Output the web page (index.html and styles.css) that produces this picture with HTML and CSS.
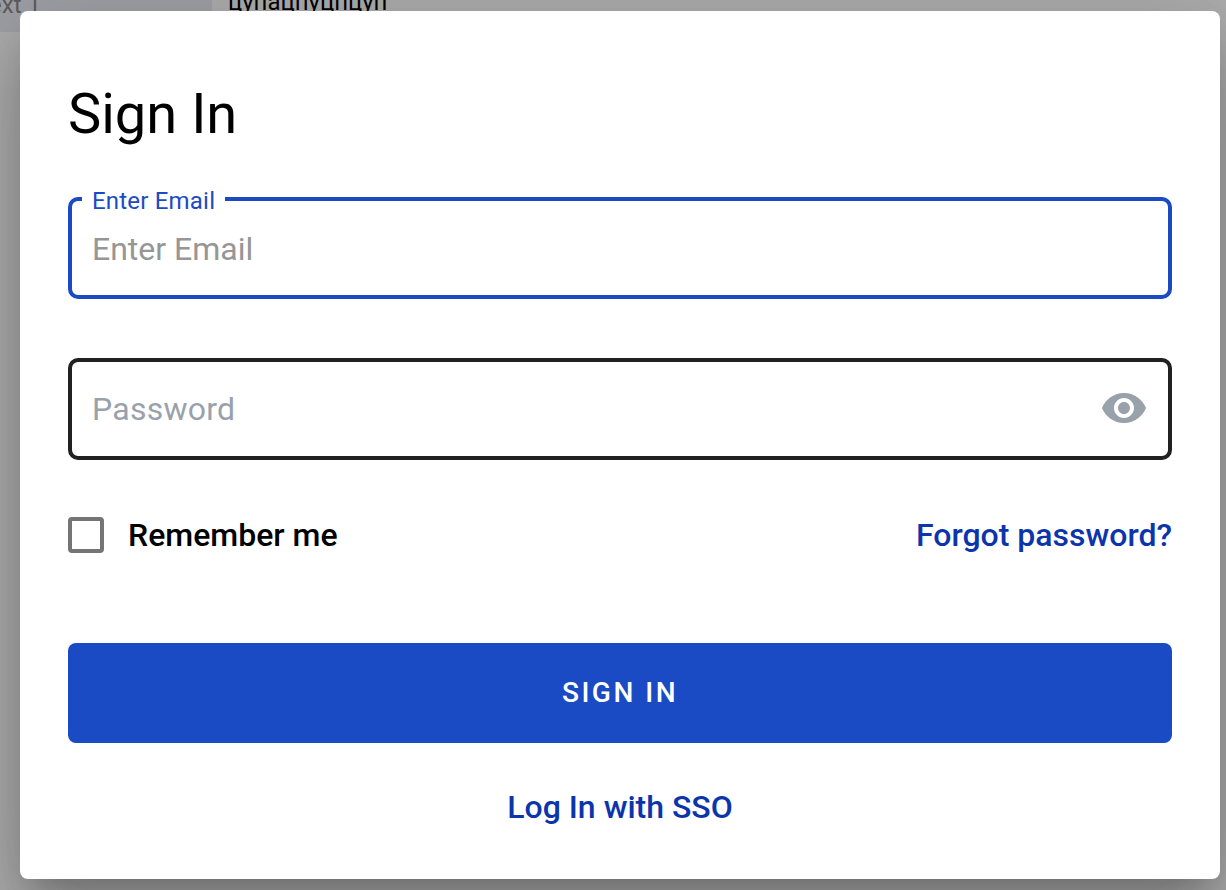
FILE: index.html
```html
<!DOCTYPE html>
<html lang="en">
<head>
<meta charset="utf-8">
<title>Sign In</title>
<link rel="stylesheet" href="styles.css">
</head>
<body>
<div class="page">
  <div class="page-row"><div class="page-label"><span class="label-text">ext 1</span></div><div class="page-value">цупацпуцпцуп</div></div>
</div>
<main class="dialog">
  <h1 class="title">Sign In</h1>
  <form class="form">
    <div class="field focused">
      <label class="floating" for="email">Enter Email</label>
      <input id="email" type="email" placeholder="Enter Email">
    </div>
    <div class="field">
      <input type="password" placeholder="Password" aria-label="Password">
      <svg class="eye" viewBox="0 0 24 24"><path d="M12 4.5C7 4.5 2.73 7.61 1 12c1.73 4.39 6 7.5 11 7.5s9.27-3.11 11-7.5c-1.73-4.39-6-7.5-11-7.5zM12 17c-2.76 0-5-2.24-5-5s2.24-5 5-5 5 2.24 5 5-2.24 5-5 5zm0-8c-1.66 0-3 1.34-3 3s1.34 3 3 3 3-1.34 3-3-1.34-3-3-3z"/></svg>
    </div>
    <div class="options">
      <label class="remember"><input class="check" type="checkbox"><span class="remember-text">Remember me</span></label>
      <a class="link">Forgot password?</a>
    </div>
    <button class="submit" type="button">SIGN IN</button>
    <a class="link sso">Log In with SSO</a>
  </form>
</main>
</body>
</html>
```
FILE: styles.css
```css
* { box-sizing: border-box; }
body {
  margin: 0;
  width: 1226px;
  height: 890px;
  overflow: hidden;
  background: #adadad;
  font-family: Roboto, "Liberation Sans", sans-serif;
  color: #000;
}
.page { position: absolute; inset: 0; overflow: hidden; }
.page-row { display: flex; height: 32px; font-size: 24px; line-height: 32px; }
.page-label { display: flex; width: 212px; background: #9fa1a6; color: #5d5d5d; }
.label-text { margin: -11px 0 0 -11px; white-space: pre; }
.page-value { padding-left: 16px; margin-top: -14px; }
.dialog {
  position: relative;
  width: 1200px;
  height: 868px;
  margin: 11px 0 0 20px;
  padding: 71px 48px 0;
  border-radius: 8px;
  background: #fff;
  box-shadow: 0 22px 30px -14px rgba(0,0,0,.2), 0 48px 76px 6px rgba(0,0,0,.14), 0 18px 92px 16px rgba(0,0,0,.12);
}
.title { margin: 0 0 51px; font-size: 56px; line-height: 64px; font-weight: 400; }
.form { display: flex; flex-direction: column; }
.field {
  position: relative;
  display: flex;
  align-items: center;
  height: 102px;
  margin-bottom: 59px;
  padding: 0 20px;
  border: 4px solid #212121;
  border-radius: 10px;
}
.field.focused { border-color: #1b4bc4; }
.floating {
  position: absolute;
  left: 10px;
  top: -14px;
  width: 143px;
  padding-left: 10px;
  background: #fff;
  color: #1b4bc4;
  font-size: 24px;
  line-height: 28px;
  letter-spacing: .2px;
}
.field input {
  flex: 1;
  min-width: 0;
  padding: 0;
  border: 0;
  outline: 0;
  background: none;
  font: 400 32px/40px Roboto, sans-serif;
  letter-spacing: .25px;
}
.field.focused input { padding-top: 2px; letter-spacing: 0; }
.field input::placeholder { color: #99a1ab; opacity: 1; }
.field.focused input::placeholder { color: #969696; }
.eye { width: 48px; height: 48px; margin-bottom: 2px; fill: #99a1ab; }
.options { display: flex; justify-content: space-between; align-items: center; height: 40px; margin: -4px 0 88px; }
.remember { display: flex; align-items: center; gap: 24px; font-size: 32px; font-weight: 500; }
.check { appearance: none; width: 36px; height: 36px; margin: 0; border: 4px solid #757575; border-radius: 4px; }
.link { color: #0d35ab; font-size: 32px; line-height: 40px; font-weight: 500; }
.submit {
  height: 100px;
  border: 0;
  border-radius: 8px;
  background: #1b4bc4;
  color: #fff;
  font: 500 28px/32px Roboto, sans-serif;
  letter-spacing: 2.5px;
}
.sso { align-self: center; margin-top: 44px; }
```
